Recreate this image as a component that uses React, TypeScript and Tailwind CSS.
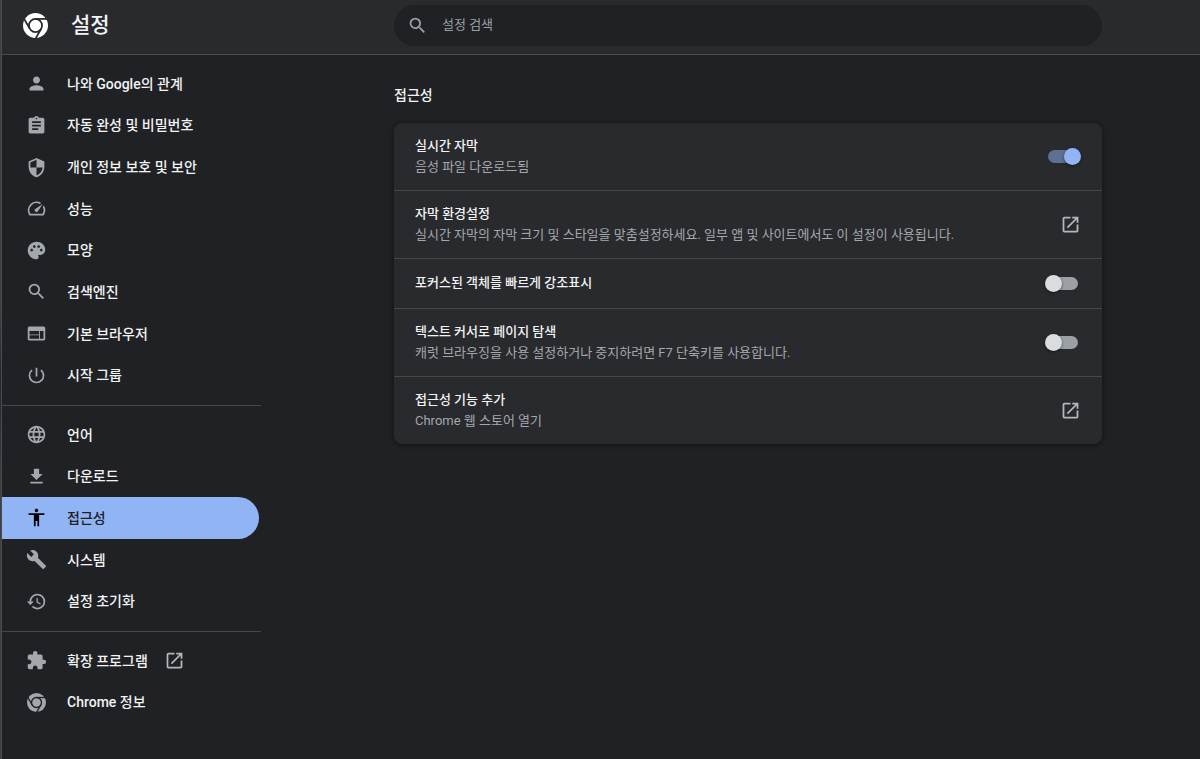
import { useId, useState, type ReactNode } from "react";
import {
  MdPerson, MdAssignment, MdSecurity, MdSpeed, MdPalette, MdSearch, MdWeb, MdPowerSettingsNew,
  MdLanguage, MdFileDownload, MdAccessibility, MdBuild, MdRestore, MdExtension, MdLaunch,
} from "react-icons/md";

function ChromeLogo({ className }: { className: string }) {
  const maskId = useId();
  return (
    <svg viewBox="0 0 24 24" className={className} fill="currentColor" aria-hidden="true">
      <mask id={maskId} maskUnits="userSpaceOnUse" x="0" y="0" width="24" height="24">
        <rect width="24" height="24" fill="white" />
        <g fill="none" stroke="black" strokeWidth="1.7">
          <circle cx="12" cy="12" r="6.3" />
          <path d="M12 5.7H24" />
          <path d="M12 5.7H24" transform="rotate(120 12 12)" />
          <path d="M12 5.7H24" transform="rotate(240 12 12)" />
        </g>
      </mask>
      <circle cx="12" cy="12" r="12" mask={`url(#${maskId})`} />
    </svg>
  );
}

type Item = { label: string; icon: ReactNode; active?: boolean; external?: boolean };

const iconSize = "size-[21px]";

const main: Item[] = [
  { label: "나와 Google의 관계", icon: <MdPerson className={iconSize} /> },
  { label: "자동 완성 및 비밀번호", icon: <MdAssignment className={iconSize} /> },
  { label: "개인 정보 보호 및 보안", icon: <MdSecurity className={iconSize} /> },
  { label: "성능", icon: <MdSpeed className={iconSize} /> },
  { label: "모양", icon: <MdPalette className={iconSize} /> },
  { label: "검색엔진", icon: <MdSearch className={iconSize} /> },
  { label: "기본 브라우저", icon: <MdWeb className={iconSize} /> },
  { label: "시작 그룹", icon: <MdPowerSettingsNew className={iconSize} /> },
];

const advanced: Item[] = [
  { label: "언어", icon: <MdLanguage className={iconSize} /> },
  { label: "다운로드", icon: <MdFileDownload className={iconSize} /> },
  { label: "접근성", icon: <MdAccessibility className={iconSize} />, active: true },
  { label: "시스템", icon: <MdBuild className={iconSize} /> },
  { label: "설정 초기화", icon: <MdRestore className={iconSize} /> },
];

const about: Item[] = [
  { label: "확장 프로그램", icon: <MdExtension className={iconSize} />, external: true },
  { label: "Chrome 정보", icon: <ChromeLogo className="size-[19px]" /> },
];

function NavGroup({ items, height }: { items: Item[]; height: string }) {
  return (
    <ul className={`grid auto-rows-fr ${height}`}>
      {items.map((item) => (
        <li key={item.label} className="mr-[2px] flex">
          <a
            href="#"
            aria-current={item.active ? "page" : undefined}
            className={`flex flex-1 items-center rounded-r-full pl-6 text-sm font-medium ${
              item.active ? "bg-[#91b4f5] text-[#202124]" : "text-[#f1f3f4]"
            }`}
          >
            <span className={`flex w-[21px] justify-center ${item.active ? "text-black" : "text-[#a3a8ad]"}`}>
              {item.icon}
            </span>
            <span className="ml-5">{item.label}</span>
            {item.external && <MdLaunch className="ml-4 size-[21px] text-[#b4b8bc]" />}
          </a>
        </li>
      ))}
    </ul>
  );
}

function Toggle({ id, defaultOn }: { id: string; defaultOn?: boolean }) {
  const [on, setOn] = useState(Boolean(defaultOn));
  return (
    <span className={`relative flex h-[17px] w-9 items-center ${on ? "justify-end" : "justify-start"}`}>
      <input
        id={id}
        type="checkbox"
        role="switch"
        checked={on}
        onChange={(e) => setOn(e.target.checked)}
        className="absolute inset-0 z-10 cursor-pointer opacity-0"
      />
      <span
        className={`absolute inset-x-[3px] inset-y-[2px] rounded-full ${on ? "bg-[#5d6f93]" : "bg-[#9aa0a6]"}`}
      />
      <span
        className={`relative size-[17px] rounded-full shadow-[0_1px_3px_rgba(0,0,0,0.5)] ${
          on ? "bg-[#91b4f5]" : "bg-[#dadce0]"
        }`}
      />
    </span>
  );
}

type Row = { id: string; title: string; note?: string; kind: "toggle" | "link"; on?: boolean };

const rows: Row[] = [
  { id: "live-caption", title: "실시간 자막", note: "음성 파일 다운로드됨", kind: "toggle", on: true },
  {
    id: "caption-prefs",
    title: "자막 환경설정",
    note: "실시간 자막의 자막 크기 및 스타일을 맞춤설정하세요. 일부 앱 및 사이트에서도 이 설정이 사용됩니다.",
    kind: "link",
  },
  { id: "focus-highlight", title: "포커스된 객체를 빠르게 강조표시", kind: "toggle" },
  {
    id: "caret-browsing",
    title: "텍스트 커서로 페이지 탐색",
    note: "캐럿 브라우징을 사용 설정하거나 중지하려면 F7 단축키를 사용합니다.",
    kind: "toggle",
  },
  { id: "add-features", title: "접근성 기능 추가", note: "Chrome 웹 스토어 열기", kind: "link" },
];

function SettingRow({ row }: { row: Row }) {
  const height = row.note ? "min-h-[68px] last:min-h-[67px]" : "min-h-[50px]";
  const body = (
    <span className="flex-1 pb-[2px] text-left text-[13px] leading-[21px]">
      <span className="block font-medium text-[#f1f3f4]">{row.title}</span>
      {row.note && <span className="block text-[#a3a8ad]">{row.note}</span>}
    </span>
  );
  if (row.kind === "link") {
    return (
      <a href="#" className={`flex items-center px-[21px] ${height}`}>
        {body}
        <MdLaunch className="size-[21px] text-[#b4b8bc]" />
      </a>
    );
  }
  return (
    <label htmlFor={row.id} className={`flex items-center px-[21px] ${height}`}>
      {body}
      <Toggle id={row.id} defaultOn={row.on} />
    </label>
  );
}

export default function App() {
  return (
    <div className="bg-linear-to-b from-[#3f4044] from-40% via-[#182a30] via-50% to-[#3f4044] to-65% pl-px">
      <div
        lang="ko"
        className="flex min-h-screen flex-col border-l border-[#4a4b4e] bg-[#202124] font-['Roboto','Noto_Sans_CJK_KR',sans-serif] text-[#f1f3f4]"
      >
        <header className="flex h-[55px] items-center border-b border-[#4a4b4e] bg-[#292a2d]">
          <div className="flex w-[260px] shrink-0 items-center pb-1 pl-[21px]">
            <ChromeLogo className="size-[25px] text-white" />
            <h1 className="ml-[23px] text-[21px] leading-7 font-medium">설정</h1>
          </div>
          <div className="flex-1 pr-[98px] pb-1 pl-[132px]">
            <label className="flex h-[41px] w-full max-w-[708px] items-center rounded-full bg-[#202124] pl-[13px]">
              <MdSearch className="size-[21px] text-[#9aa0a6]" />
              <input
                type="search"
                aria-label="설정 검색"
                placeholder="설정 검색"
                className="ml-[14px] flex-1 bg-transparent text-[13px] outline-none placeholder:text-[#9aa0a6]"
              />
            </label>
          </div>
        </header>

        <div className="flex flex-1">
          <nav className="w-[259px] shrink-0 pt-2">
            <NavGroup items={main} height="min-h-[333px]" />
            <hr className="mt-[9px] mb-2 border-[#46474a]" />
            <NavGroup items={advanced} height="min-h-[208px]" />
            <hr className="mt-[9px] mb-2 border-[#46474a]" />
            <NavGroup items={about} height="min-h-[83px]" />
          </nav>
          <main className="flex-1 pt-[29px] pr-[98px] pl-[133px]">
            <section className="w-full max-w-[708px]">
              <h2 className="text-sm leading-[22px] font-medium">접근성</h2>
              <div className="mt-[17px] divide-y divide-[#46474a] rounded-lg bg-[#292a2d] shadow-[0_1px_4px_1px_rgba(0,0,0,0.35)]">
                {rows.map((row) => (
                  <SettingRow key={row.id} row={row} />
                ))}
              </div>
            </section>
          </main>
        </div>
      </div>
    </div>
  );
}
